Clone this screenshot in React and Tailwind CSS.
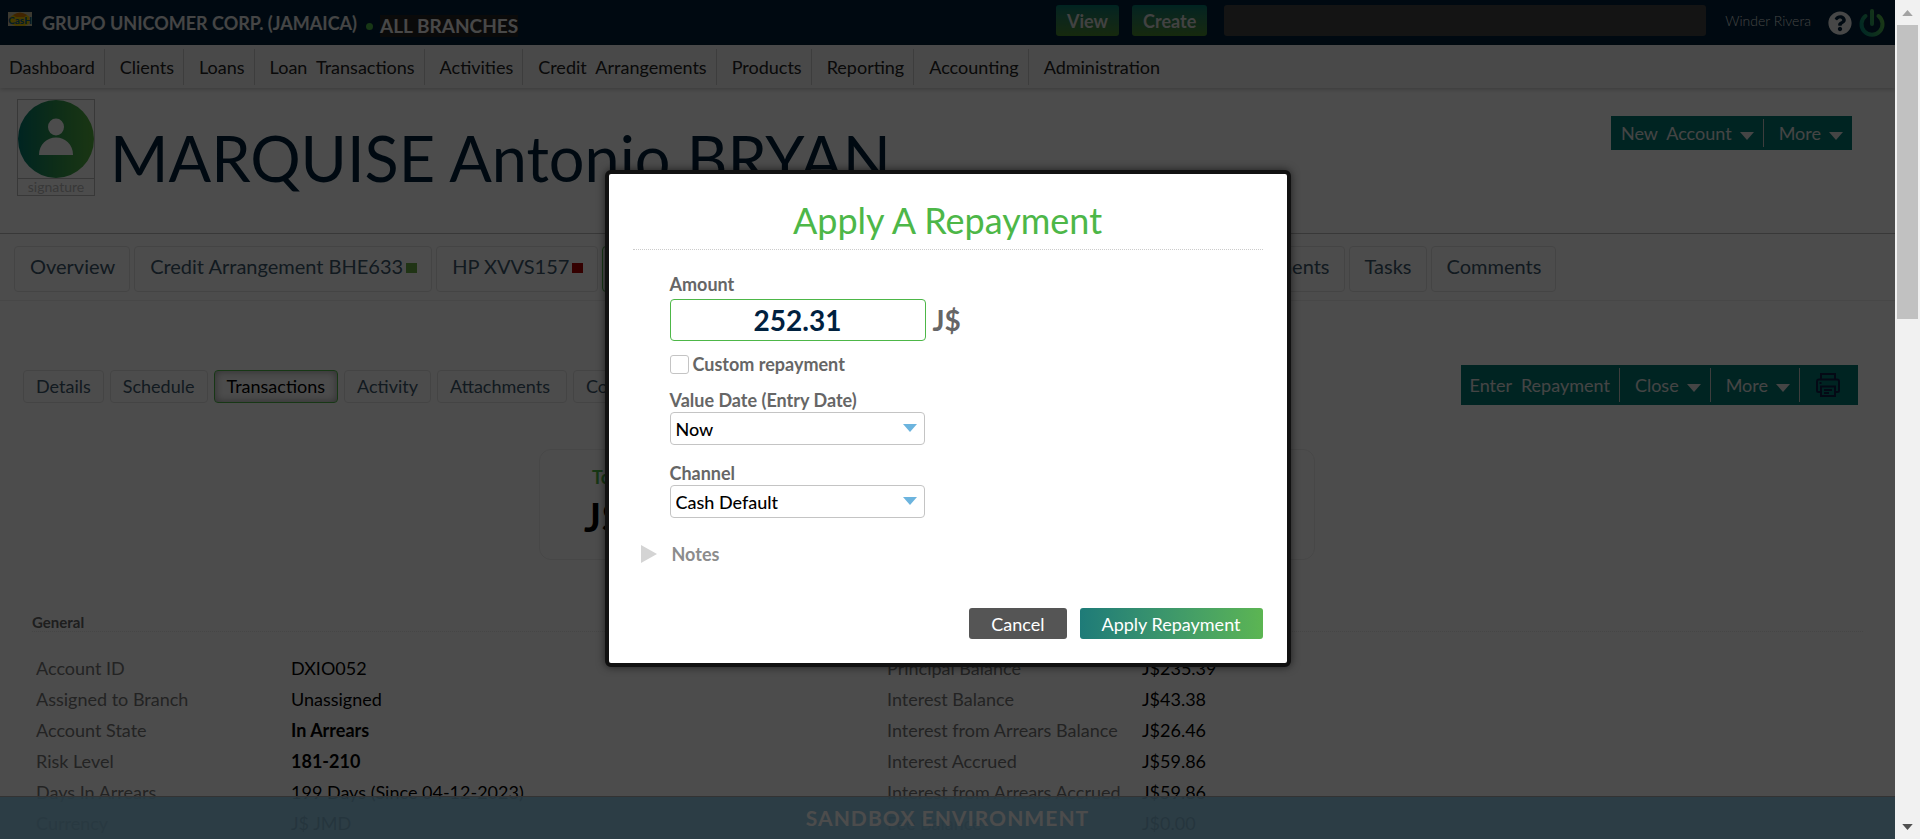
import React from 'react';
import { FaQuestionCircle } from 'react-icons/fa';

const NAV = [
  'Dashboard', 'Clients', 'Loans', 'Loan  Transactions', 'Activities',
  'Credit  Arrangements', 'Products', 'Reporting', 'Accounting', 'Administration',
];

const GENERAL = [
  ['Account ID', 'DXIO052'],
  ['Assigned to Branch', 'Unassigned'],
  ['Account State', 'In Arrears', true],
  ['Risk Level', '181-210', true],
  ['Days In Arrears', '199 Days (Since 04-12-2023)'],
  ['Currency', 'J$ JMD'],
];

const BALANCES = [
  ['Principal Balance', 'J$235.39'],
  ['Interest Balance', 'J$43.38'],
  ['Interest from Arrears Balance', 'J$26.46'],
  ['Interest Accrued', 'J$59.86'],
  ['Interest from Arrears Accrued', 'J$59.86'],
  ['Fee Balance', 'J$0.00'],
];

function Caret({ className }) {
  return (
    <svg viewBox="0 0 14 8" className={className} aria-hidden="true">
      <path d="M0 0h14L7 8z" fill="currentColor" />
    </svg>
  );
}

function CashLogo() {
  return (
    <svg width="24" height="14" viewBox="0 0 24 14" aria-hidden="true" className="mb-2">
      <rect width="24" height="14" fill="#c9c3a4" />
      <ellipse cx="12" cy="8" rx="11" ry="6.5" fill="#e9c400" />
      <path d="M5 3Q12 -2 19 3L16 5H8z" fill="#d97a00" />
      <text x="12" y="12" textAnchor="middle" fontFamily="Lato, sans-serif" fontWeight="900" fontSize="10" fill="#0d5f86">CasH</text>
    </svg>
  );
}

function Avatar() {
  return (
    <svg width="76" height="78" viewBox="0 0 76 78" preserveAspectRatio="none" aria-hidden="true">
      <defs>
        <linearGradient id="avatar" x1="0" y1="0" x2="1" y2="0">
          <stop offset="0" stopColor="#007a70" />
          <stop offset="0.5" stopColor="#2f9850" />
          <stop offset="1" stopColor="#58b440" />
        </linearGradient>
      </defs>
      <ellipse cx="38" cy="39" rx="38" ry="39" fill="url(#avatar)" />
      <ellipse cx="38" cy="27" rx="8" ry="8.5" fill="#fff" />
      <path d="M21 55C21 44 29 37.500 38 37.500S55 44 55 55z" fill="#fff" />
    </svg>
  );
}

function PowerIcon() {
  return (
    <svg width="26" height="28" viewBox="0 0 26 28" fill="none" aria-hidden="true">
      <defs>
        <linearGradient id="power" gradientUnits="userSpaceOnUse" x1="0" y1="20" x2="26" y2="10">
          <stop offset="0" stopColor="#00857d" />
          <stop offset="1" stopColor="#5fbf46" />
        </linearGradient>
      </defs>
      <path d="M6.500 7A10.500 10.500 0 1 0 19.500 7M13 2v13" stroke="url(#power)" strokeWidth="4" strokeLinecap="round" />
    </svg>
  );
}

function PrinterIcon() {
  return (
    <svg width="24" height="24" viewBox="0 0 24 24" fill="none" stroke="#0f2148" strokeWidth="2" aria-hidden="true">
      <path d="M5 6V1h14v5M5 19H2.500Q1 19 1 17.500V8.500Q1 6.500 3 6.500H21Q23 6.500 23 8.500V17.500Q23 19 21.500 19H19" />
      <path d="M5 13.500h14V23H5zM8 17h8M8 20h5M3.500 10h2" />
    </svg>
  );
}

function ToolButton({ children, caret }) {
  return (
    <button type="button" className="flex items-center gap-2 self-stretch whitespace-pre pl-[15px] pr-[9px]">
      {children}
      {caret && <Caret className="mt-[6px] h-2 w-[14px]" />}
    </button>
  );
}

function MainTab({ children, active, mark }) {
  return (
    <a
      href="#tab"
      className={`flex h-[46px] shrink-0 items-start gap-[3px] rounded border pl-[15px] pr-[14px] pt-[7px] text-xl leading-6 text-[#3c586c] ${active ? 'grow border-[#4db748]' : 'border-[#e4e4e4]'}`}
    >
      {children}
      {mark && <span className={`mt-[9px] h-[10px] w-[11px] ${mark}`} />}
    </a>
  );
}

function SubTab({ children, active }) {
  return (
    <a
      href="#section"
      className={`flex h-[33px] shrink-0 items-center rounded border px-3 pb-[2px] text-lg leading-6 ${active ? 'border-[#4db748] text-black shadow-[inset_0_0_8px_rgba(0,0,0,0.4)]' : 'border-[#e4e4e4] text-[#3c586c]'}`}
    >
      {children}
    </a>
  );
}

function Details({ rows }) {
  return (
    <table className="w-[690px] shrink-0 text-left text-lg leading-6">
      <tbody>
        {rows.map(([label, value, strong]) => (
          <tr key={label} className="h-[31px]">
            <th scope="row" className="w-[255px] font-normal text-[#777]">{label}</th>
            <td className={strong ? 'font-bold text-black' : 'text-black'}>{value}</td>
          </tr>
        ))}
      </tbody>
    </table>
  );
}

function SelectField({ id, label, option, className }) {
  return (
    <div className={className}>
      <label htmlFor={id} className="block text-lg font-bold leading-6 text-[#666]">{label}</label>
      <div className="relative w-[255px]">
        <select id={id} className="block h-[33px] w-full appearance-none rounded border border-[#c4c4c4] bg-white px-[5px] text-lg font-medium leading-6 text-black">
          <option>{option}</option>
        </select>
        <Caret className="pointer-events-none absolute right-2 top-3 h-2 w-[14px] text-[#6cb4de]" />
      </div>
    </div>
  );
}

function RepaymentDialog() {
  return (
    <div className="absolute inset-0 flex items-start justify-center bg-black/70 pt-[170px]">
      <form role="dialog" aria-labelledby="dialog-title" className="w-[686px] rounded-md border-4 border-[#111] bg-white px-6 pb-6 pt-[21px] shadow-[0_0_8px_rgba(0,0,0,0.6)]">
        <h2 id="dialog-title" className="border-b border-dotted border-[#ccc] pb-1 text-center text-4xl leading-[50px] text-[#4db748]">
          Apply A Repayment
        </h2>
        <div className="pl-[37px] pt-[22px]">
          <label htmlFor="amount" className="block text-lg font-bold leading-6 text-[#666]">Amount</label>
          <div className="flex items-center gap-[7px] pt-[3px] text-[28px] font-bold leading-9">
            <input id="amount" defaultValue="252.31" className="h-[42px] w-64 rounded border border-[#4db748] text-center text-[#00213f]" />
            <span className="text-[#666]">J$</span>
          </div>
          <div className="flex items-center gap-1 pt-[11px] text-lg font-bold leading-6 text-[#666]">
            <input id="custom" type="checkbox" className="size-[19px] appearance-none rounded-[3px] border border-[#c4c4c4]" />
            <label htmlFor="custom">Custom repayment</label>
          </div>
          <SelectField id="date" label="Value Date (Entry Date)" option="Now" className="pt-3" />
          <SelectField id="channel" label="Channel" option="Cash Default" className="pt-4" />
        </div>
        <button type="button" className="ml-2 mt-6 flex items-center gap-[15px] text-lg font-bold leading-6 text-[#8c8c8c]">
          <svg width="16" height="18" viewBox="0 0 16 18" aria-hidden="true"><path d="M0 0v18L16 9z" fill="#d4d4d4" /></svg>
          Notes
        </button>
        <div className="flex justify-end gap-[13px] pt-[42px] text-lg leading-6 text-white">
          <button type="button" className="h-[31px] rounded-[3px] bg-[#555] px-[22px]">Cancel</button>
          <button type="submit" className="h-[31px] rounded-[3px] bg-linear-to-r from-[#1e7b78] to-[#5cb552] px-[22px]">Apply Repayment</button>
        </div>
      </form>
    </div>
  );
}

export default function App() {
  return (
    <div className="flex h-screen overflow-hidden bg-white font-['Lato','Noto_Sans',sans-serif]">
      <div className="relative min-w-0 flex-1 overflow-hidden">
        <header className="flex h-[45px] items-center bg-[#002139] pl-2 pr-[10px]">
          <CashLogo />
          <span className="ml-[10px] text-lg font-bold leading-6 text-[#e6e6e6]">GRUPO UNICOMER CORP. (JAMAICA)</span>
          <span className="ml-[9px] mt-2 size-[7px] rounded-full bg-[#4db748]" />
          <span className="ml-[7px] mt-[6px] bg-[#222] text-[19px] font-bold leading-[22px] text-[#f0f0f0]">ALL BRANCHES</span>
          <div className="mb-1 ml-auto flex items-center">
            <button type="button" className="h-[31px] rounded-[3px] bg-linear-to-b from-[#00786f] to-[#4a8a2c] px-[11px] text-lg font-bold text-[#ddd]">View</button>
            <button type="button" className="ml-[13px] h-[31px] rounded-[3px] bg-linear-to-b from-[#00786f] to-[#4a8a2c] px-[11px] text-lg font-bold text-[#ddd]">Create</button>
            <input aria-label="Search" className="ml-[17px] h-[31px] w-[482px] rounded-[3px] bg-[#444]" />
            <span className="ml-[19px] text-sm font-light leading-5 text-[#ddd]">Winder Rivera</span>
            <button type="button" aria-label="Help" className="ml-[17px] mt-1"><FaQuestionCircle className="size-6 text-[#eee]" /></button>
            <button type="button" aria-label="Log out" className="ml-[7px] mt-1"><PowerIcon /></button>
          </div>
        </header>

        <nav className="flex h-[43px] items-center bg-[#f5f5f5] shadow-[0_1px_5px_rgba(0,0,0,0.25)]">
          {NAV.map((item, i) => (
            <a
              key={item}
              href="#menu"
              className={`whitespace-pre pr-[9px] text-lg font-normal leading-9 text-[#222] ${i === 0 ? 'pl-[9px]' : 'pl-[15px]'} ${i < NAV.length - 1 ? 'border-r border-[#ccc]' : ''}`}
            >
              {item}
            </a>
          ))}
        </nav>

        <section className="flex h-[146px] items-start border-b border-[#bbb] pl-[17px] pr-[43px] pt-[11px]">
          <div className="w-[78px] text-center">
            <div className="border border-[#bbb]"><Avatar /></div>
            <div className="border border-t-0 border-[#bbb] text-sm leading-4 text-[#bbb]">signature</div>
          </div>
          <h1 className="ml-[15px] mt-[19px] text-[63px] leading-[80px] text-[#002139]">MARQUISE Antonio BRYAN</h1>
          <div className="ml-auto mt-[17px] flex h-[34px] items-center bg-[#007872] py-[3px] text-lg text-[#e6e6e6]">
            <button type="button" className="flex items-center gap-2 self-stretch whitespace-pre pl-[10px] pr-[9px]">
              New  Account<Caret className="mt-[6px] h-2 w-[14px]" />
            </button>
            <span className="w-px self-stretch bg-[#ccc]" />
            <ToolButton caret>More</ToolButton>
          </div>
        </section>

        <div className="flex gap-1 border-b border-[#eee] px-[14px] pb-2 pt-3">
          <MainTab>Overview</MainTab>
          <MainTab mark="bg-[#6cb048]">Credit Arrangement BHE633</MainTab>
          <MainTab mark="bg-[#b00000]">HP XVVS157</MainTab>
          <div className="flex w-[596px] gap-1">
            <MainTab active mark="bg-[#b00000]">HP DXIO052</MainTab>
            <MainTab>Pending Activities</MainTab>
            <MainTab>Documents</MainTab>
          </div>
          <MainTab>Attachments</MainTab>
          <MainTab>Tasks</MainTab>
          <MainTab>Comments</MainTab>
        </div>

        <div className="flex items-start pl-[23px] pr-[37px] pt-16">
          <div className="mt-[5px] flex gap-[6px]">
            <SubTab>Details</SubTab>
            <SubTab>Schedule</SubTab>
            <SubTab active>Transactions</SubTab>
            <SubTab>Activity</SubTab>
            <SubTab><span className="pr-1">Attachments</span></SubTab>
            <SubTab>Comments</SubTab>
          </div>
          <div className="ml-auto flex h-10 items-center bg-[#007872] py-[3px] text-lg text-[#e6e6e6]">
            <button type="button" className="self-stretch whitespace-pre px-[9px]">Enter  Repayment</button>
            <span className="w-px self-stretch bg-[#ccc]" />
            <ToolButton caret>Close</ToolButton>
            <span className="w-px self-stretch bg-[#ccc]" />
            <ToolButton caret>More</ToolButton>
            <span className="w-px self-stretch bg-[#ccc]" />
            <button type="button" aria-label="Print" className="self-stretch pl-4 pr-[18px]"><PrinterIcon /></button>
          </div>
        </div>

        <div className="ml-[539px] mt-11 h-[111px] w-[776px] rounded-xl border border-[#eee] pl-11 pt-[15px]">
          <div className="pl-2 text-lg font-bold leading-6 text-[#4db748]">Total Due</div>
          <div className="pt-1 text-[40px] font-bold leading-[48px] text-black">J$252.31</div>
        </div>

        <section className="px-8 pt-[53px]">
          <h3 className="border-b border-dotted border-[#e6e6e6] text-[15px] font-bold leading-[18px] text-[#666]">General</h3>
          <div className="flex gap-[161px] pl-1 pt-5">
            <Details rows={GENERAL} />
            <Details rows={BALANCES} />
          </div>
        </section>

        <div className="absolute inset-x-0 bottom-0 flex h-[43px] items-center justify-center border-t border-[#aaa] bg-[#8ac5e3]/90 text-[21px] font-bold tracking-wider text-white">
          SANDBOX ENVIRONMENT
        </div>

        <RepaymentDialog />
      </div>

      <div className="flex w-[25px] flex-col items-center bg-[#f1f1f1]" aria-hidden="true">
        <div className="flex h-[25px] items-center"><Caret className="h-[6px] w-[11px] rotate-180 text-[#a3a3a3]" /></div>
        <div className="h-[294px] w-[21px] bg-[#c1c1c1]" />
        <div className="mt-auto flex h-[25px] items-center"><Caret className="h-[6px] w-[11px] text-[#505050]" /></div>
      </div>
    </div>
  );
}
